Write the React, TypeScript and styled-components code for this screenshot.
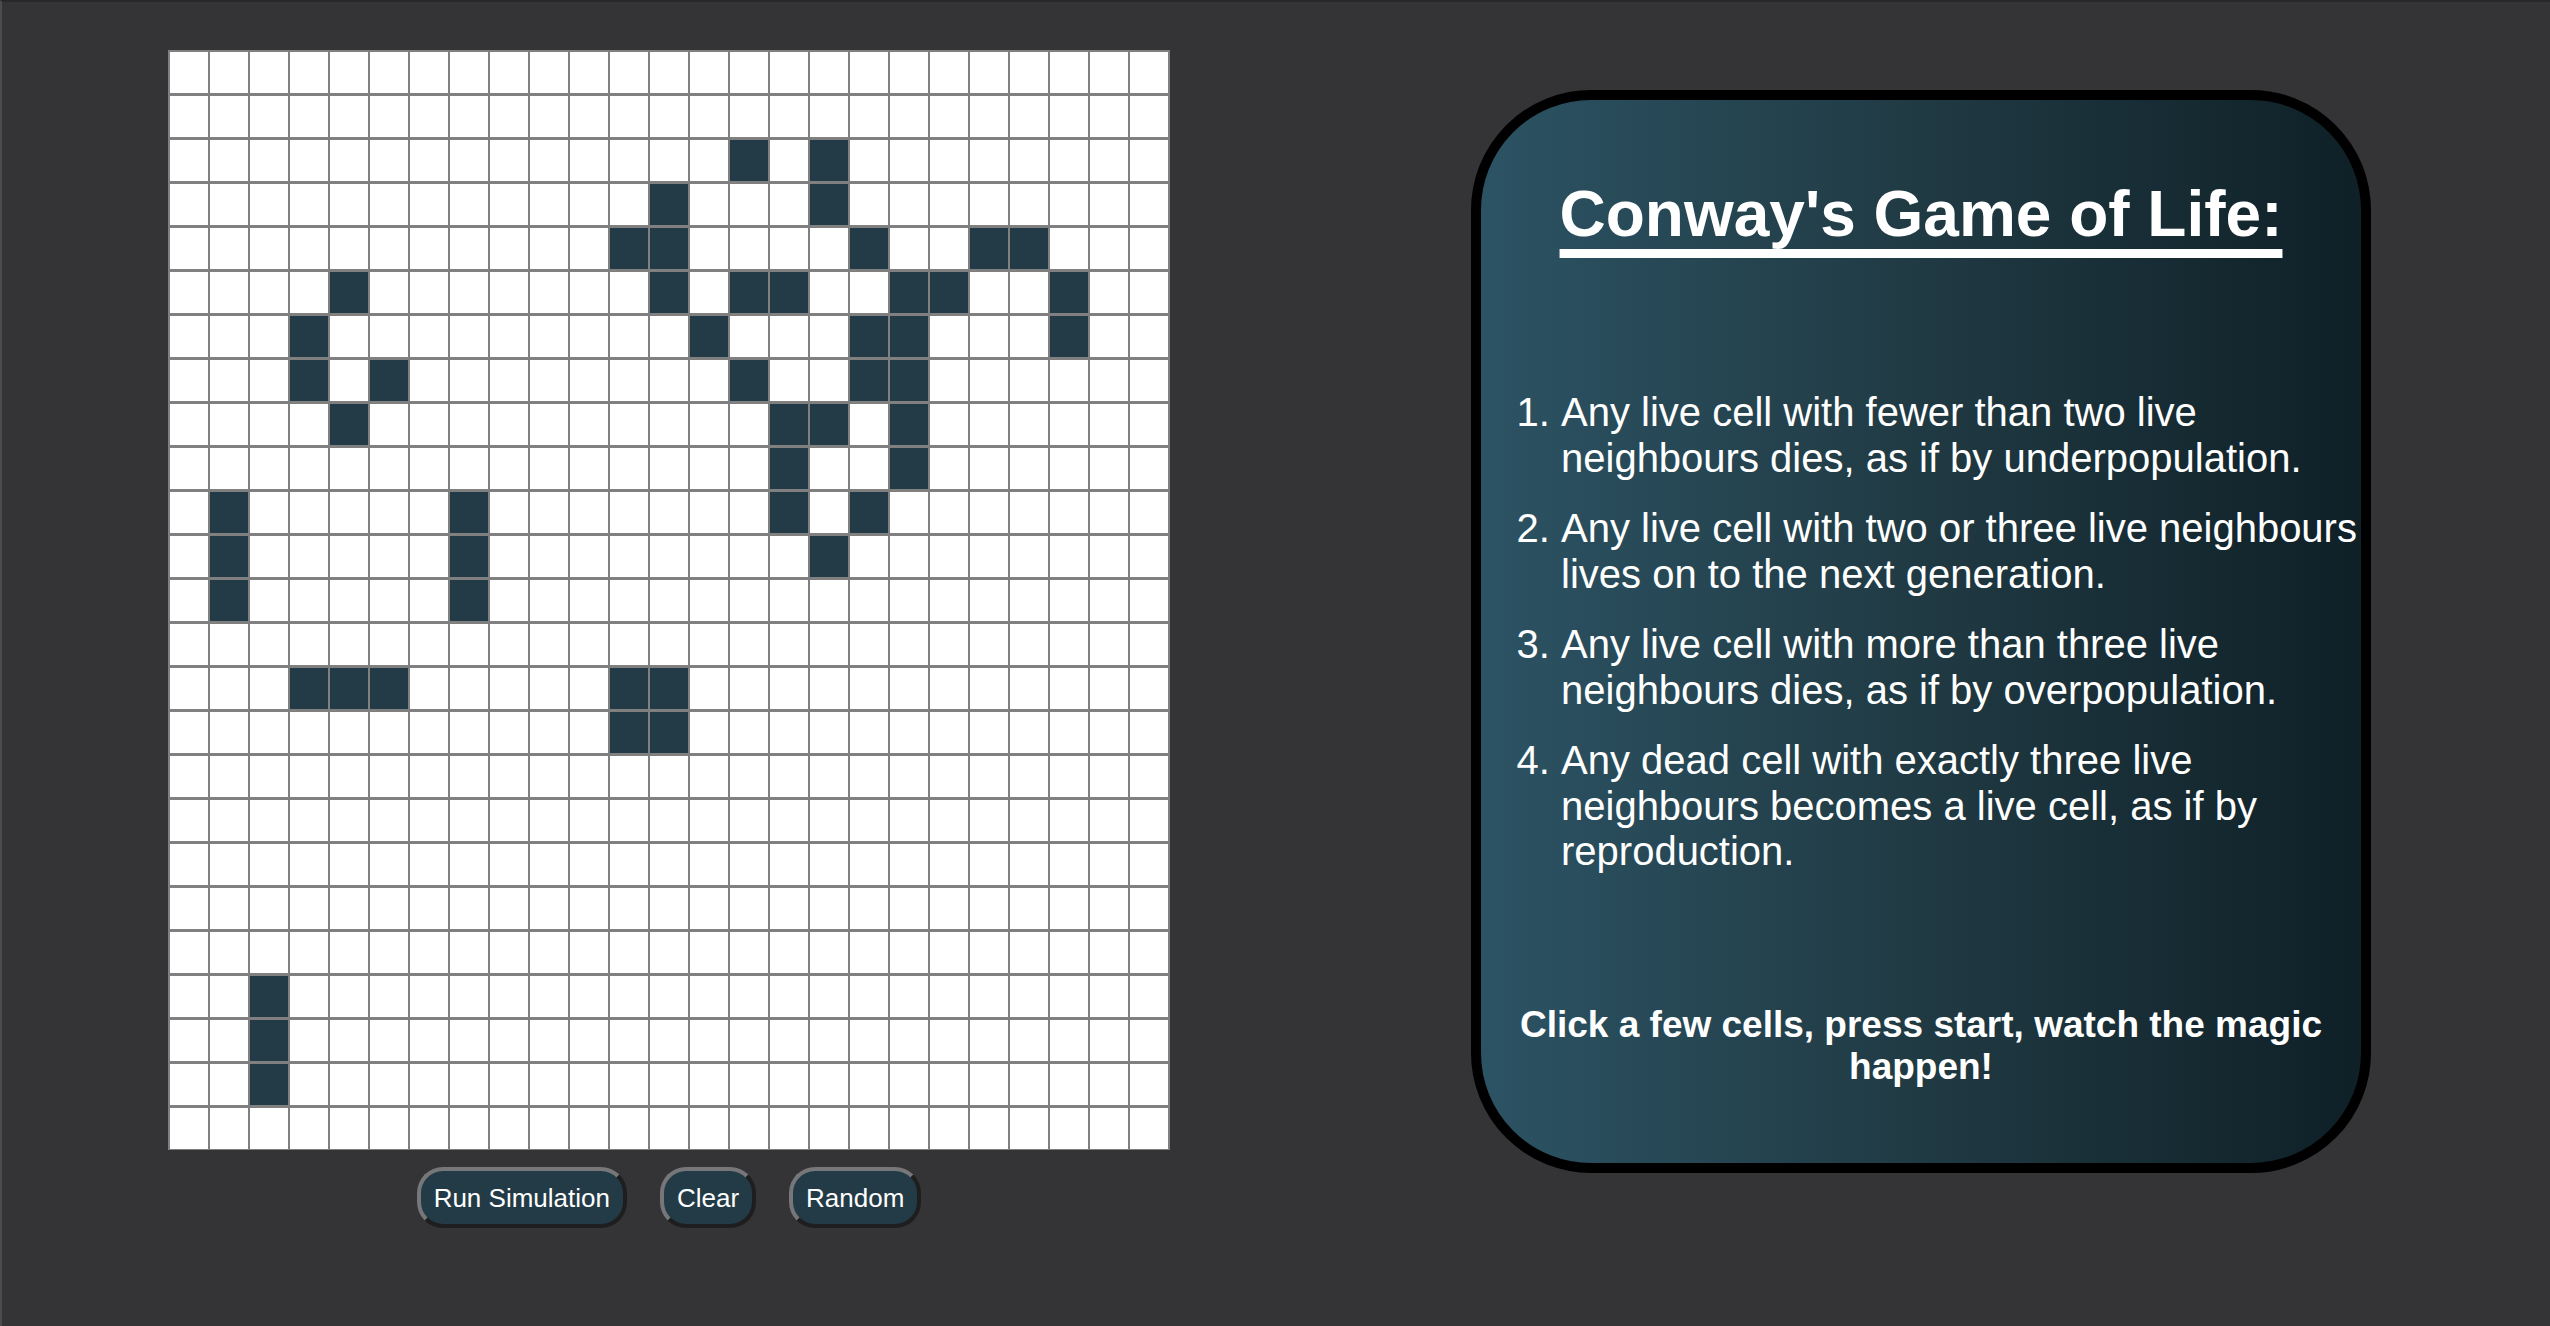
import React, { useCallback, useEffect, useRef, useState } from "react";
import styled, { createGlobalStyle } from "styled-components";

const ROWS = 25;
const COLS = 25;

// starting pattern, row -> live columns
const SEED: Record<number, number[]> = {
  2: [14, 16],
  3: [12, 16],
  4: [11, 12, 17, 20, 21],
  5: [4, 12, 14, 15, 18, 19, 22],
  6: [3, 13, 17, 18, 22],
  7: [3, 5, 14, 17, 18],
  8: [4, 15, 16, 18],
  9: [15, 18],
  10: [1, 7, 15, 17],
  11: [1, 7, 16],
  12: [1, 7],
  14: [3, 4, 5, 11, 12],
  15: [11, 12],
  21: [2],
  22: [2],
  23: [2],
};

const seedGrid = (): boolean[][] =>
  Array.from({ length: ROWS }, (_, r) =>
    Array.from({ length: COLS }, (_, c) => (SEED[r] || []).includes(c))
  );

const emptyGrid = (): boolean[][] =>
  Array.from({ length: ROWS }, () => Array(COLS).fill(false));

const nextGen = (g: boolean[][]) =>
  g.map((row, r) =>
    row.map((alive, c) => {
      let n = 0;
      for (let dr = -1; dr <= 1; dr++) {
        for (let dc = -1; dc <= 1; dc++) {
          if (dr === 0 && dc === 0) continue;
          const rr = r + dr;
          const cc = c + dc;
          if (rr >= 0 && rr < ROWS && cc >= 0 && cc < COLS && g[rr][cc]) n++;
        }
      }
      return alive ? n === 2 || n === 3 : n === 3;
    })
  );

const GlobalStyle = createGlobalStyle`
  html, body {
    margin: 0;
    padding: 0;
    background: #343436;
  }
  body {
    font-family: "Liberation Sans", Arial, Helvetica, sans-serif;
  }
`;

const Page = styled.div`
  box-sizing: border-box;
  min-height: 100vh;
  background: #343436;
  border-top: 2px solid #28282a;
  border-left: 2px solid #4c4c4e;
  padding: 48px 0 0 166px;
  display: flex;
  align-items: flex-start;
  gap: 301px;
`;

const BoardColumn = styled.div`
  display: flex;
  flex-direction: column;
  align-items: center;
  gap: 17px;
`;

const Board = styled.div`
  display: grid;
  grid-template-columns: repeat(${COLS}, 38.5px);
  grid-template-rows: repeat(${ROWS}, 41px);
  column-gap: 1.5px;
  row-gap: 3px;
  padding: 2px 2px 1px 1.5px;
  background: #808080;
`;

const Cell = styled.div<{ $alive: boolean }>`
  background: ${({ $alive }) => ($alive ? "#233b46" : "#ffffff")};
  cursor: pointer;
`;

const Controls = styled.div`
  display: flex;
  gap: 33px;
`;

const Button = styled.button`
  font-family: "Liberation Sans", Arial, Helvetica, sans-serif;
  font-size: 26px;
  line-height: 30px;
  color: #ffffff;
  background: #233b46;
  padding: 12px 13px 11px;
  border: 4px solid;
  border-color: #777779 #1e1e1f #1e1e1f #777779;
  border-radius: 26px;
  cursor: pointer;
`;

const Panel = styled.section`
  box-sizing: border-box;
  width: 900px;
  margin-top: 40px;
  padding: 77px 0 75px;
  border: 10px solid #000;
  border-radius: 120px;
  background: linear-gradient(to right, #2c5364, #203a43, #0f2027);
  color: #ffffff;
  display: flex;
  flex-direction: column;
`;

const Title = styled.h1`
  margin: 0;
  font-size: 64px;
  line-height: 75px;
  font-weight: 700;
  text-align: center;
  text-decoration: underline;
  text-decoration-thickness: 9px;
  text-underline-offset: 13px;
`;

const Rules = styled.ol`
  margin: 138px 0 0;
  padding: 0 0 0 80px;
  font-size: 40px;
  line-height: 45.5px;

  li + li {
    margin-top: 25px;
  }
`;

const Hint = styled.p`
  margin: 129px 0 0;
  padding: 0 20px;
  font-size: 37px;
  line-height: 42px;
  font-weight: 700;
  text-align: center;
`;

const App = () => {
  const [grid, setGrid] = useState<boolean[][]>(seedGrid);
  const [running, setRunning] = useState(false);
  const timer = useRef<number | undefined>(undefined);

  useEffect(() => {
    if (!running) return;
    timer.current = window.setInterval(() => setGrid((g) => nextGen(g)), 150);
    return () => window.clearInterval(timer.current);
  }, [running]);

  const toggle = useCallback((r: number, c: number) => {
    setGrid((g) =>
      g.map((row, i) => (i === r ? row.map((v, j) => (j === c ? !v : v)) : row))
    );
  }, []);

  const randomize = () =>
    setGrid(
      Array.from({ length: ROWS }, () =>
        Array.from({ length: COLS }, () => Math.random() > 0.7)
      )
    );

  return (
    <>
      <GlobalStyle />
      <Page>
        <BoardColumn>
          <Board>
            {grid.map((row, r) =>
              row.map((alive, c) => (
                <Cell key={`${r}-${c}`} $alive={alive} onClick={() => toggle(r, c)} />
              ))
            )}
          </Board>
          <Controls>
            <Button onClick={() => setRunning((v) => !v)}>
              {running ? "Stop" : "Run Simulation"}
            </Button>
            <Button
              onClick={() => {
                setRunning(false);
                setGrid(emptyGrid());
              }}
            >
              Clear
            </Button>
            <Button onClick={randomize}>Random</Button>
          </Controls>
        </BoardColumn>

        <Panel>
          <Title>Conway's Game of Life:</Title>
          <Rules>
            <li>
              Any live cell with fewer than two live neighbours dies, as if by
              underpopulation.
            </li>
            <li>
              Any live cell with two or three live neighbours lives on to the
              next generation.
            </li>
            <li>
              Any live cell with more than three live neighbours dies, as if by
              overpopulation.
            </li>
            <li>
              Any dead cell with exactly three live neighbours becomes a live
              cell, as if by reproduction.
            </li>
          </Rules>
          <Hint>Click a few cells, press start, watch the magic happen!</Hint>
        </Panel>
      </Page>
    </>
  );
};

export default App;
